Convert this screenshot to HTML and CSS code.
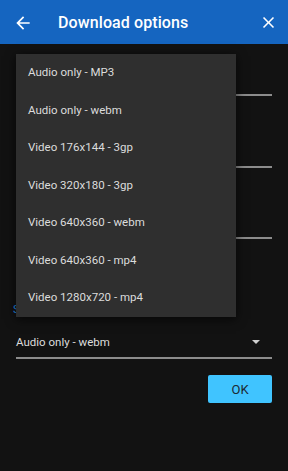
FILE: index.html
```html
<!DOCTYPE HTML>
<html>
<head>
<meta charset="utf-8">
<title>Download options</title>
<link rel="stylesheet" href="styles.css">
</head>
<body>
<div class="barra">
	<svg class="icono atras" viewBox="0 0 24 24"><path d="M20 11H7.83l5.59-5.59L12 4l-8 8 8 8 1.41-1.41L7.83 13H20v-2z"/></svg>
	<span class="titulo">Download options</span>
	<svg class="icono cerrar" viewBox="0 0 24 24"><path d="M19 6.41L17.59 5 12 10.59 6.41 5 5 6.41 10.59 12 5 17.59 6.41 19 12 13.41 17.59 19 19 17.59 13.41 12z"/></svg>
</div>

<div class="formulario">
	<div class="campo"></div>
	<div class="campo"></div>
	<div class="campo"></div>
	<div class="etiqueta">Select format</div>
	<div class="selector">
		<span>Audio only - webm</span>
		<span class="flecha"></span>
	</div>
	<div class="acciones">
		<button class="ok">OK</button>
	</div>
</div>

<ul class="menu">
	<li>Audio only - MP3</li>
	<li>Audio only - webm</li>
	<li>Video 176x144 - 3gp</li>
	<li>Video 320x180 - 3gp</li>
	<li>Video 640x360 - webm</li>
	<li>Video 640x360 - mp4</li>
	<li>Video 1280x720 - mp4</li>
</ul>
</body>
</html>
```

FILE: styles.css
```css
body {
		margin:0;
		background-color:#121212;
		font-family:Roboto, "Noto Sans", sans-serif;
		height:471px;
		overflow:hidden;
	}

.barra {
		height:44px;
		background-color:#1565c0;
		display:flex;
		align-items:center;
		padding:0 10px 0 13px;
		color:#fff;
	}

.icono {
		fill:#fff;
		flex:none;
	}

.atras {
		width:20px;
		height:20px;
		margin-top:2px;
	}

.cerrar {
		width:19px;
		height:19px;
		margin-left:auto;
	}

.titulo {
		margin-left:25px;
		font-size:16px;
		font-weight:500;
		letter-spacing:0.1px;
	}

.formulario {
		padding:0 16px;
		display:flex;
		flex-direction:column;
	}

.campo {
		height:52px;
		box-sizing:border-box;
		border-bottom:2px solid #8c8c8c;
		margin-bottom:19.5px;
	}

.etiqueta {
		margin-top:45.5px;
		margin-left:-3px;
		height:12px;
		line-height:12px;
		font-size:11px;
		color:#2196f3;
	}

.selector {
		height:43px;
		box-sizing:border-box;
		padding-top:11px;
		display:flex;
		align-items:center;
		border-bottom:2px solid #8c8c8c;
		font-size:11.5px;
		color:#dcdcdc;
	}

.flecha {
		margin-left:auto;
		margin-right:12px;
		width:0;
		height:0;
		border-left:4px solid transparent;
		border-right:4px solid transparent;
		border-top:4px solid #cfcfcf;
	}

.acciones {
		display:flex;
		justify-content:flex-end;
		margin-top:16px;
	}

.ok {
		width:64px;
		height:28px;
		border:none;
		border-radius:2px;
		background-color:#40c4ff;
		color:#1c2a33;
		font-family:Roboto, sans-serif;
		font-size:13px;
	}

.menu {
		position:absolute;
		top:54px;
		left:16px;
		width:220px;
		margin:0;
		padding:0;
		list-style:none;
		background-color:#2f2f2f;
		box-shadow:0 2px 10px rgba(0,0,0,0.7);
	}

.menu li {
		height:37.5px;
		line-height:37.5px;
		padding-left:12px;
		font-size:11.5px;
		color:#dcdcdc;
	}
```
